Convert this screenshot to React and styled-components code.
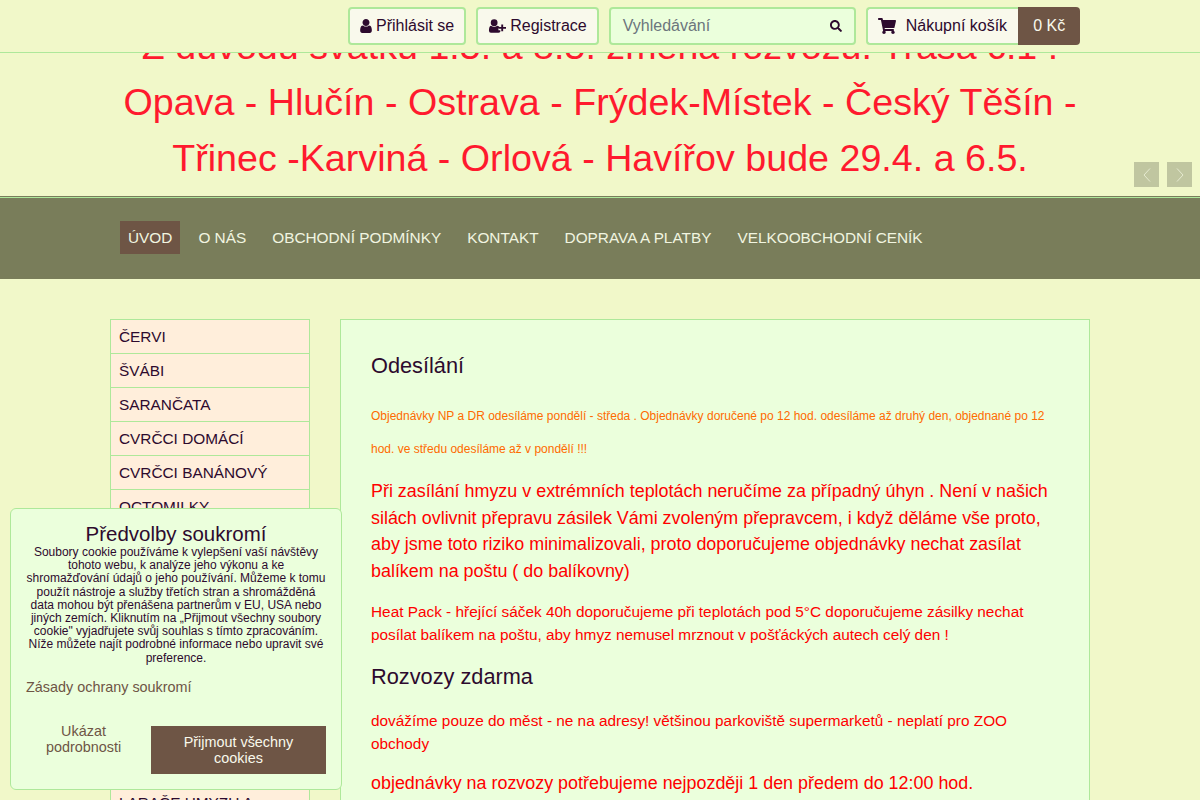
import React from "react"
import styled, { createGlobalStyle } from "styled-components"
import { FaSearch, FaShoppingCart } from "react-icons/fa"

const GlobalStyle = createGlobalStyle`
  html, body {
    margin: 0;
    height: 100%;
    overflow: hidden;
    background: #f1f8c9;
    color: #2d0a2e;
    font-family: "Liberation Sans", Arial, sans-serif;
  }
  * {
    box-sizing: border-box;
  }
`

const TopBar = styled.header`
  position: fixed;
  top: 0;
  left: 0;
  right: 0;
  height: 53px;
  padding: 7px 0 0 348px;
  display: flex;
  align-items: flex-start;
  background: #f1f8c9;
  border-bottom: 1px solid #aee89a;
  white-space: nowrap;
  z-index: 5;
`

const AuthButton = styled.a`
  height: 38px;
  margin-right: 10px;
  padding: 0 10px;
  display: flex;
  align-items: center;
  gap: 4px;
  font-size: 16px;
  color: #2d0a2e;
  background: #f9f9ec;
  border: 2px solid #aee89a;
  border-radius: 4px;
`

const SearchBox = styled.div`
  width: 247px;
  height: 38px;
  margin-right: 10px;
  padding: 0 12px;
  display: flex;
  align-items: center;
  justify-content: space-between;
  font-size: 16px;
  color: #6c757d;
  background: #ebffdc;
  border: 2px solid #aee89a;
  border-radius: 4px;
  svg {
    color: #2d0a2e;
  }
`

const CartLabel = styled.a`
  height: 38px;
  padding: 0 11px 0 10px;
  display: flex;
  align-items: center;
  gap: 10px;
  font-size: 16px;
  color: #2d0a2e;
  background: #f9f9ec;
  border: 2px solid #aee89a;
  border-right: 0;
  border-radius: 4px 0 0 4px;
`

const CartPrice = styled.a`
  height: 38px;
  padding: 0 15px;
  display: flex;
  align-items: center;
  font-size: 16px;
  color: #f9f9ec;
  background: #6e5545;
  border-radius: 0 4px 4px 0;
`

const Banner = styled.section`
  position: relative;
  height: 197px;
  padding: 18px 120px 0;
  font-size: 37.65px;
  line-height: 56px;
  text-align: center;
  color: #ff1a2e;
  overflow: hidden;
  border-bottom: 1px solid #797d5a;
`

const SlideArrow = styled.button`
  position: absolute;
  top: 162px;
  right: ${(p) => p.$right}px;
  width: 25px;
  height: 25px;
  padding: 0;
  display: flex;
  align-items: center;
  justify-content: center;
  background: #c0c6a0;
  border: 0;
  svg {
    display: block;
  }
`

const NavBar = styled.nav`
  height: 82px;
  padding: 23px 120px 0;
  display: flex;
  align-items: flex-start;
  gap: 10px;
  background: #797d5a;
  border-top: 1px solid #aee89a;
`

const NavLink = styled.a`
  height: 33px;
  padding: 0 8px;
  display: flex;
  align-items: center;
  font-size: 15.36px;
  text-transform: uppercase;
  color: #f1f5e0;
  background: ${(p) => (p.$active ? "#6e5545" : "transparent")};
`

const Columns = styled.main`
  padding: 40px 110px 0;
  display: flex;
  align-items: flex-start;
  gap: 30px;
`

const SideMenu = styled.ul`
  width: 200px;
  flex: none;
  margin: 0;
  padding: 0;
  list-style: none;
  background: #ffeedb;
  border: 1px solid #aee89a;
`

const SideItem = styled.li`
  height: 34px;
  padding: 0 8px;
  display: flex;
  align-items: center;
  font-size: 15.36px;
  text-transform: uppercase;
  border-bottom: 1px solid #aee89a;
  &:last-child {
    border-bottom: 0;
  }
`

const HiddenItems = styled.li`
  height: 262px;
`

const Content = styled.article`
  flex: 1;
  padding: 30px;
  background: #ebffdc;
  border: 1px solid #aee89a;
`

const Heading = styled.h2`
  margin: 0 0 ${(p) => p.$gap}px;
  font-size: 21.76px;
  font-weight: 400;
  line-height: 32px;
`

const SmallOrange = styled.p`
  margin: 0 0 12px;
  font-size: 12px;
  line-height: 33px;
  color: #ff6a00;
`

const LargeRed = styled.p`
  margin: 0 0 15px;
  font-size: 17.92px;
  line-height: 26.67px;
  color: #ff0000;
`

const Red = styled.p`
  margin: 0 0 15px;
  font-size: 15.36px;
  line-height: 23px;
  color: #ff0000;
`

const CookieDialog = styled.aside`
  position: fixed;
  left: 10px;
  top: 508px;
  width: 332px;
  height: 282px;
  padding: 14px 15px 15px;
  background: #ebffdc;
  border: 1px solid #aee89a;
  border-radius: 6px;
  z-index: 10;
`

const CookieTitle = styled.h3`
  margin: 0 0 1px;
  font-size: 20.48px;
  font-weight: 400;
  line-height: 22px;
  text-align: center;
`

const CookieText = styled.p`
  margin: 0 0 12px;
  font-size: 12px;
  line-height: 13.2px;
  text-align: center;
`

const PrivacyLink = styled.a`
  display: block;
  font-size: 14.4px;
  line-height: 20px;
  color: #6e5545;
`

const CookieActions = styled.div`
  margin-top: 29px;
  display: grid;
  grid-template-columns: 115px 175px;
  justify-content: space-between;
  align-items: start;
  font-size: 14.4px;
  line-height: 16px;
  text-align: center;
`

const DetailsLink = styled.a`
  margin-top: -3px;
  padding: 0 15px;
  color: #6e5545;
`

const AcceptButton = styled.button`
  height: 48px;
  padding: 0 10px;
  font: inherit;
  color: #f9f9ec;
  background: #6e5545;
  border: 0;
`

const Chevron = ({ flip }) => (
  <svg width="8" height="14" viewBox="0 0 8 14">
    <polyline
      points={flip ? "1,0.5 7,7 1,13.5" : "7,0.5 1,7 7,13.5"}
      fill="none"
      stroke="#e6ead0"
      strokeWidth="1"
    />
  </svg>
)

const UserIcon = () => (
  <svg width="12" height="14" viewBox="256 128 1280 1536" fill="currentColor">
    <path d="M1536 1399q0 109-62.500 187t-150.500 78h-854q-88 0-150.500-78t-62.500-187q0-85 8.500-160.500t31.500-152 58.500-131 94-89 134.500-34.500q131 128 313 128t313-128q76 0 134.500 34.500t94 89 58.500 131 31.500 152 8.500 160.500zm-256-887q0 159-112.500 271.500t-271.500 112.500-271.500-112.500-112.500-271.500 112.500-271.500 271.500-112.500 271.500 112.500 112.500 271.500z" />
  </svg>
)

const UserPlusIcon = () => (
  <svg width="18" height="14" viewBox="0 0 19 14" fill="currentColor">
    <circle cx="6.500" cy="3.600" r="3.600" />
    <path d="M3 6.800q3.500 2.300 7 0q2 .3 2.800 2.200h-1.800v2.500h2v1.600q-.7.900-2 .9h-8q-2 0-2-2.300q0-4 2-4.900z" />
    <path d="M14 5.500h2v2.500h3v2h-3v2.500h-2v-2.500h-3v-2h3z" />
  </svg>
)

const menuTop = ["Červi", "Švábi", "Sarančata", "Cvrčci domácí", "Cvrčci banánový", "Octomilky"]

export default function App() {
  return (
    <>
      <GlobalStyle />
      <TopBar>
        <AuthButton>
          <UserIcon /> Přihlásit se
        </AuthButton>
        <AuthButton>
          <UserPlusIcon /> Registrace
        </AuthButton>
        <SearchBox>
          Vyhledávání
          <FaSearch size={12} />
        </SearchBox>
        <CartLabel>
          <FaShoppingCart size={18} /> Nákupní košík
        </CartLabel>
        <CartPrice>0 Kč</CartPrice>
      </TopBar>

      <Banner>
        Z důvodu svátku 1.5. a 8.5. změna rozvozů. Trasa č.1 : Opava - Hlučín - Ostrava - Frýdek-Místek -
        Český Těšín - Třinec -Karviná - Orlová - Havířov bude 29.4. a 6.5.
        <SlideArrow $right={41}>
          <Chevron />
        </SlideArrow>
        <SlideArrow $right={8}>
          <Chevron flip />
        </SlideArrow>
      </Banner>

      <NavBar>
        <NavLink $active>Úvod</NavLink>
        <NavLink>O nás</NavLink>
        <NavLink>Obchodní podmínky</NavLink>
        <NavLink>Kontakt</NavLink>
        <NavLink>Doprava a platby</NavLink>
        <NavLink>Velkoobchodní ceník</NavLink>
      </NavBar>

      <Columns>
        <SideMenu>
          {menuTop.map((item) => (
            <SideItem key={item}>{item}</SideItem>
          ))}
          <HiddenItems />
          <SideItem>Larače hmyzu a</SideItem>
        </SideMenu>

        <Content>
          <Heading $gap={18}>Odesílání</Heading>
          <SmallOrange>
            Objednávky NP a DR odesíláme pondělí - středa . Objednávky doručené po 12 hod. odesíláme až druhý den,
            objednané po 12 hod. ve středu odesíláme až v pondělí !!!
          </SmallOrange>
          <LargeRed>
            Při zasílání hmyzu v extrémních teplotách neručíme za případný úhyn . Není v našich silách ovlivnit
            přepravu zásilek Vámi zvoleným přepravcem, i když děláme vše proto, aby jsme toto riziko
            minimalizovali, proto doporučujeme objednávky nechat zasílat balíkem na poštu ( do balíkovny)
          </LargeRed>
          <Red>
            Heat Pack - hřející sáček 40h doporučujeme při teplotách pod 5°C doporučujeme zásilky nechat posílat
            balíkem na poštu, aby hmyz nemusel mrznout v pošťáckých autech celý den !
          </Red>
          <Heading $gap={16}>Rozvozy zdarma</Heading>
          <Red>
            dovážíme pouze do měst - ne na adresy! většinou parkoviště supermarketů - neplatí pro ZOO obchody
          </Red>
          <LargeRed>objednávky na rozvozy potřebujeme nejpozději 1 den předem do 12:00 hod.</LargeRed>
        </Content>
      </Columns>

      <CookieDialog>
        <CookieTitle>Předvolby soukromí</CookieTitle>
        <CookieText>
          Soubory cookie používáme k vylepšení vaší návštěvy tohoto webu, k analýze jeho výkonu a ke shromažďování
          údajů o jeho používání. Můžeme k tomu použít nástroje a služby třetích stran a shromážděná data mohou být
          přenášena partnerům v EU, USA nebo jiných zemích. Kliknutím na „Přijmout všechny soubory cookie"
          vyjadřujete svůj souhlas s tímto zpracováním. Níže můžete najít podrobné informace nebo upravit své
          preference.
        </CookieText>
        <PrivacyLink>Zásady ochrany soukromí</PrivacyLink>
        <CookieActions>
          <DetailsLink>Ukázat podrobnosti</DetailsLink>
          <AcceptButton>Přijmout všechny cookies</AcceptButton>
        </CookieActions>
      </CookieDialog>
    </>
  )
}
